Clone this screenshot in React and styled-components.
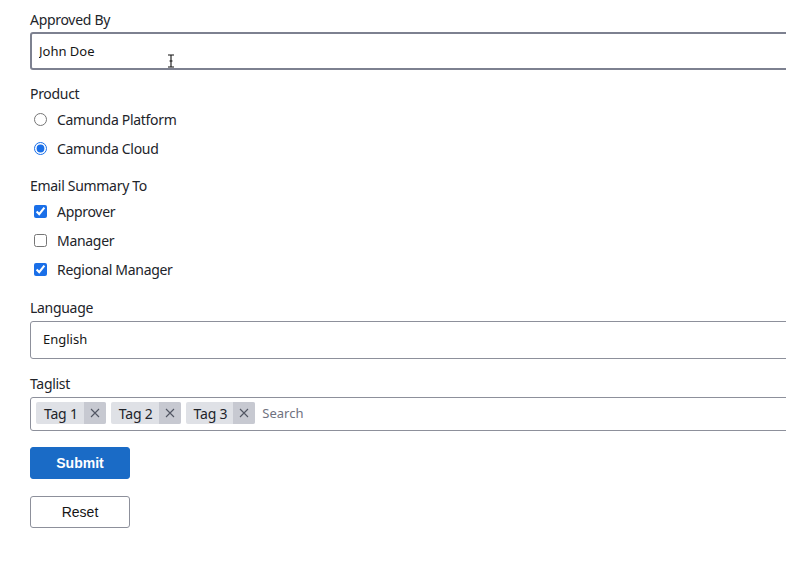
import React from "react";
import styled, { createGlobalStyle } from "styled-components";

const GlobalStyle = createGlobalStyle`
  html, body {
    margin: 0;
    padding: 0;
    background: #ffffff;
    overflow: hidden;
  }
  body {
    font-family: "Noto Sans", "Open Sans", sans-serif;
    color: #161616;
  }
`;

const tags = ["Tag 1", "Tag 2", "Tag 3"];

const App = () => {
  return (
    <>
      <GlobalStyle />
      <Page>
        <Form onSubmit={(e) => e.preventDefault()}>
          <Field $gap={14}>
            <Label>Approved By</Label>
            <TextInput defaultValue="John Doe" />
            <Cursor viewBox="0 0 8 14" aria-hidden="true">
              <path
                d="M1 1h2.5l0.5 0.6 0.5-0.6H7M1 13h2.5l0.5-0.6 0.5 0.6H7M4 1.6v10.8M2.5 7h3"
                stroke="#111"
                strokeWidth="1.1"
                fill="none"
              />
            </Cursor>
          </Field>

          <Field $gap={13}>
            <Label $tight>Product</Label>
            <Option>
              <Radio type="radio" name="product" value="platform" />
              Camunda Platform
            </Option>
            <Option>
              <Radio type="radio" name="product" value="cloud" defaultChecked />
              Camunda Cloud
            </Option>
          </Field>

          <Field $gap={14}>
            <Label $tight>Email Summary To</Label>
            <Option>
              <Check type="checkbox" defaultChecked />
              Approver
            </Option>
            <Option>
              <Check type="checkbox" />
              Manager
            </Option>
            <Option>
              <Check type="checkbox" defaultChecked />
              Regional Manager
            </Option>
          </Field>

          <Field $gap={15}>
            <Label>Language</Label>
            <SelectBox>English</SelectBox>
          </Field>

          <Field $gap={16}>
            <Label>Taglist</Label>
            <TagBox>
              {tags.map((t) => (
                <Tag key={t}>
                  <TagText>{t}</TagText>
                  <TagRemove>
                    <svg width="10" height="10" viewBox="0 0 10 10">
                      <path
                        d="M1 1l8 8M9 1l-8 8"
                        stroke="#525663"
                        strokeWidth="1.1"
                      />
                    </svg>
                  </TagRemove>
                </Tag>
              ))}
              <SearchInput placeholder="Search" />
            </TagBox>
          </Field>

          <SubmitButton type="submit">Submit</SubmitButton>
          <ResetButton type="reset">Reset</ResetButton>
        </Form>
      </Page>
    </>
  );
};

export default App;

/* ---------------- Styled Components ---------------- */
const Page = styled.div`
  padding: 10px 0 0 30px;
  width: 1000px;
`;

const Form = styled.form`
  display: flex;
  flex-direction: column;
  align-items: flex-start;
`;

const Field = styled.div`
  position: relative;
  width: 100%;
  display: flex;
  flex-direction: column;
  margin-bottom: ${({ $gap }) => $gap}px;
`;

const Label = styled.label`
  font-size: 14px;
  line-height: 20px;
  letter-spacing: -0.3px;
  color: #22242a;
  margin-bottom: ${({ $tight }) => ($tight ? 1 : 2)}px;
`;

const TextInput = styled.input`
  box-sizing: border-box;
  width: 100%;
  height: 38px;
  padding: 0 7px;
  font-family: inherit;
  font-size: 13px;
  color: #161616;
  border: 2px solid #7d8190;
  border-radius: 3px;
  outline: none;
  background: #fff;
`;

const Cursor = styled.svg`
  position: absolute;
  left: 137px;
  top: 44px;
  width: 8px;
  height: 14px;
`;

const Option = styled.label`
  display: flex;
  align-items: center;
  height: 29px;
  gap: 10px;
  font-size: 14px;
  letter-spacing: -0.3px;
  color: #22242a;
`;

const Radio = styled.input`
  width: 13px;
  height: 13px;
  margin: 0 0 0 4px;
  accent-color: #1a6fe8;
`;

const Check = styled.input`
  width: 13px;
  height: 13px;
  margin: 0 0 0 4px;
  accent-color: #1a6fe8;
`;

const SelectBox = styled.div`
  box-sizing: border-box;
  width: 100%;
  height: 38px;
  display: flex;
  align-items: center;
  padding: 0 12px 2px;
  font-size: 13px;
  color: #161616;
  border: 1px solid #8d909b;
  border-radius: 3px;
  margin-top: 1px;
`;

const TagBox = styled.div`
  box-sizing: border-box;
  width: 100%;
  height: 34px;
  display: flex;
  align-items: center;
  gap: 5px;
  padding: 0 5px 2px;
  border: 1px solid #8d909b;
  border-radius: 3px;
  margin-top: 1px;
`;

const Tag = styled.div`
  display: flex;
  height: 22px;
  border-radius: 2px;
  overflow: hidden;
  background: #dfe1e6;
`;

const TagText = styled.span`
  display: flex;
  align-items: center;
  padding: 0 6px 0 8px;
  font-size: 14px;
  letter-spacing: -0.2px;
  color: #22242a;
`;

const TagRemove = styled.span`
  width: 22px;
  display: flex;
  align-items: center;
  justify-content: center;
  background: #c7c9d1;
`;

const SearchInput = styled.input`
  border: none;
  outline: none;
  font-family: inherit;
  font-size: 13px;
  padding: 0 2px;
  color: #161616;

  &::placeholder {
    color: #6f7280;
  }
`;

const BaseButton = styled.button`
  width: 100px;
  height: 32px;
  border-radius: 3px;
  font-family: "Liberation Sans", Arial, sans-serif;
  font-size: 14px;
  cursor: pointer;
`;

const SubmitButton = styled(BaseButton)`
  background: #1a6bc6;
  border: 1px solid #1a6bc6;
  color: #ffffff;
  font-weight: 700;
  margin-bottom: 17px;
`;

const ResetButton = styled(BaseButton)`
  background: #ffffff;
  border: 1px solid #8d909b;
  color: #161616;
`;
